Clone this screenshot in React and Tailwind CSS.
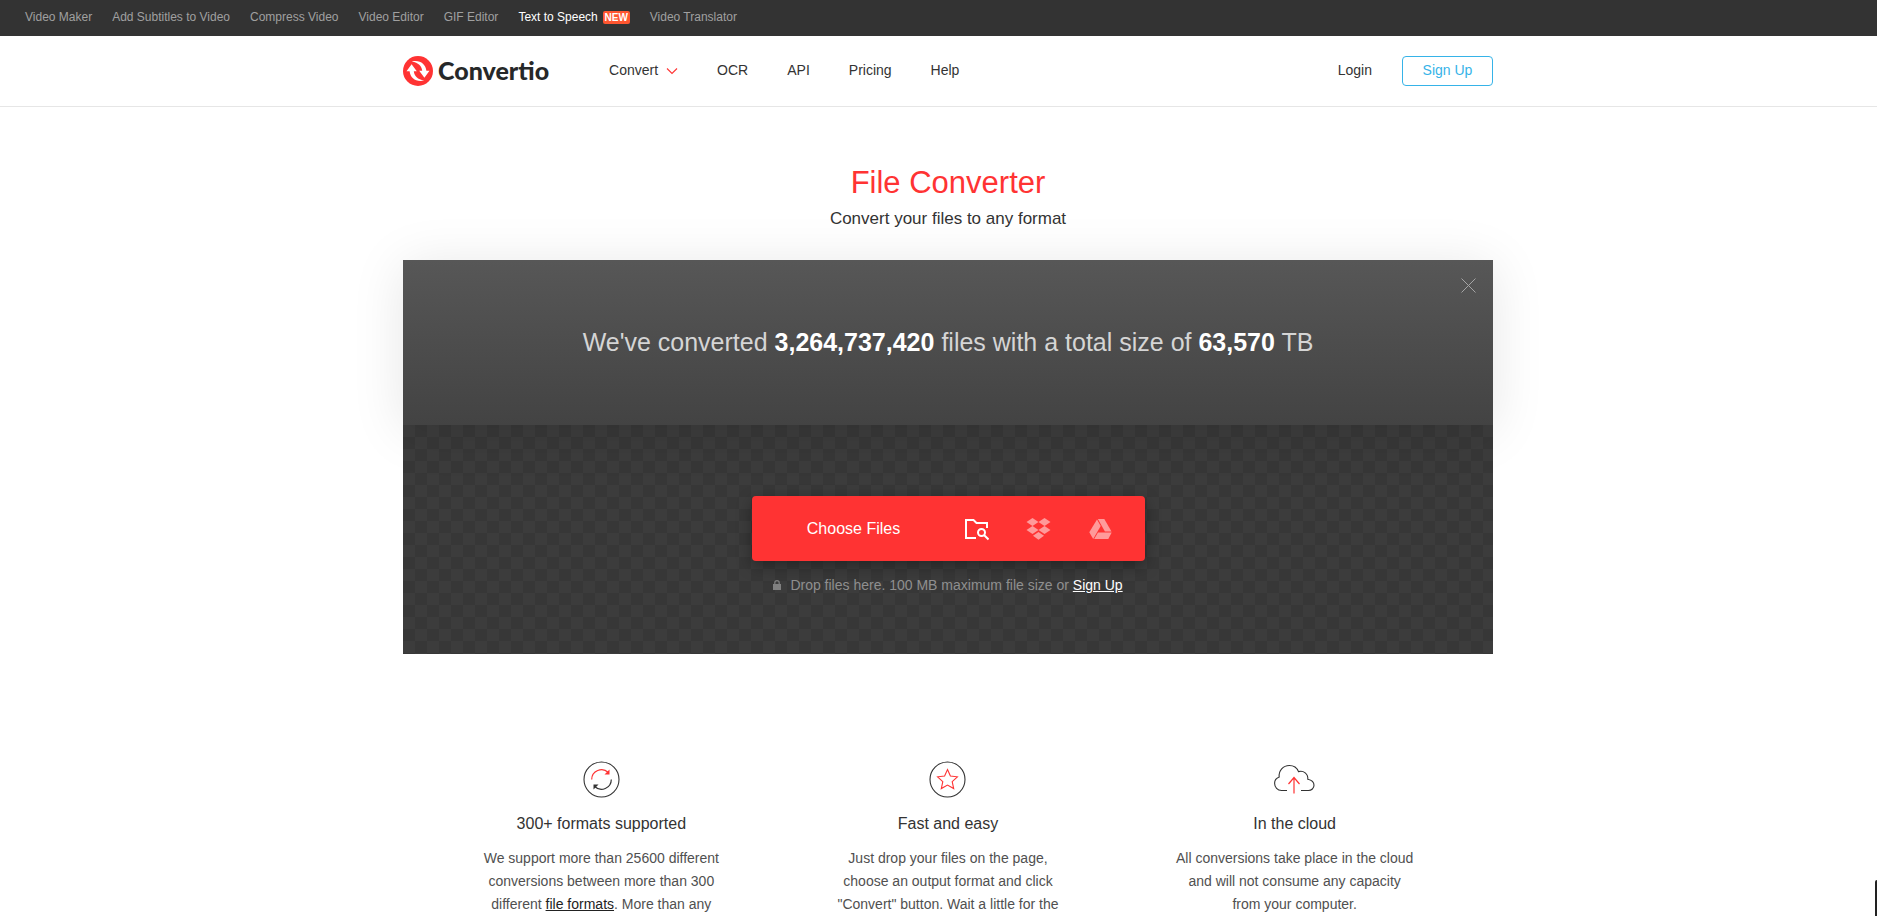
import React, { useState } from 'react';

const topLinks = [
  { label: 'Video Maker' },
  { label: 'Add Subtitles to Video' },
  { label: 'Compress Video' },
  { label: 'Video Editor' },
  { label: 'GIF Editor' },
  { label: 'Text to Speech', isNew: true },
  { label: 'Video Translator' },
];

const TopBar = () => (
  <nav className="bg-[#333] h-9 pl-[25px] pb-[2px] flex items-center gap-5 text-[12px] leading-4 text-[#a0a0a0]">
    {topLinks.map((link) => (
      <a
        key={link.label}
        href="#"
        className={`flex items-center whitespace-nowrap hover:text-white ${link.isNew ? 'text-white' : ''}`}
      >
        {link.label}
        {link.isNew && (
          <span className="ml-[5px] h-[13px] w-[27px] rounded-[2px] bg-[#ff5630] text-center text-[10px] leading-[13px] font-bold text-white">
            NEW
          </span>
        )}
      </a>
    ))}
  </nav>
);

const Logo = () => (
  <a href="#" aria-label="Convertio" className="flex items-center gap-[5px]">
    <svg width="30" height="30" viewBox="0 0 30 30">
      <circle cx="15" cy="15" r="15" fill="#f33" />
      <path d="M3.500 15.200 8.600 8.300l5.200 6.900h-3c.5 4.600 3.800 8.300 10.400 9.300-7.800 2-13.900-2.300-14.600-9.300z" fill="#fff" />
      <path d="M26.500 14.800 21.400 21.700l-5.200-6.900h3c-.5-4.600-3.800-8.300-10.400-9.300 7.800-2 13.900 2.300 14.600 9.300z" fill="#fff" />
    </svg>
    <span className="pb-[2px] font-['Lato',sans-serif] text-[25px] leading-[30px] font-black text-[#262829]">Convertio</span>
  </a>
);

const Header = () => (
  <header className="border-b border-[#e6e6e6] pl-[19px]">
    <div className="max-w-[1090px] h-[70px] mx-auto flex items-center text-[14px] leading-5 text-[#333]">
      <Logo />
      <nav className="ml-[60px] pb-[2px] flex items-center gap-[39px]">
        <a href="#" className="flex items-center gap-2">
          Convert
          <svg width="12" height="8" viewBox="0 0 12 8" fill="none" stroke="#f33" strokeWidth="1.1" className="mt-[2px]">
            <path d="M1 1.500l5 5 5-5" />
          </svg>
        </a>
        <a href="#">OCR</a>
        <a href="#">API</a>
        <a href="#">Pricing</a>
        <a href="#">Help</a>
      </nav>
      <div className="ml-auto flex items-center gap-[30px]">
        <a href="#" className="pb-[2px]">Login</a>
        <a href="#" className="w-[91px] h-[30px] border border-[#36b3e8] rounded text-center leading-[26px] text-[#36b3e8]">
          Sign Up
        </a>
      </div>
    </div>
  </header>
);

const Banner = ({ onClose }) => (
  <div className="relative z-10 h-[165px] pb-[2px] flex items-center justify-center bg-linear-to-b from-[#575757] to-[#434343] shadow-[0_5px_50px_rgba(0,0,0,0.1)]">
    <p className="text-[25px] leading-8 text-[#d5d5d5]">
      We've converted <b className="text-white">3,264,737,420</b> files with a total size of{' '}
      <b className="text-white">63,570</b> TB
    </p>
    <button type="button" aria-label="Close" onClick={onClose} className="absolute top-[18px] right-[17px] cursor-pointer">
      <svg width="15" height="15" viewBox="0 0 15 15" stroke="#a5a5a5" strokeWidth="1">
        <path d="M.5.5l14 14M14.500.5l-14 14" />
      </svg>
    </button>
  </div>
);

const sourceButton = 'w-[62px] h-full flex items-center justify-center cursor-pointer';

const ChooseFiles = () => (
  <div className="w-[393px] h-[65px] flex rounded bg-[#f33] text-white shadow-[0_5px_15px_rgba(0,0,0,0.35)]">
    <button type="button" className="flex-1 pl-[10px] text-[16px] leading-5 cursor-pointer">
      Choose Files
    </button>
    <button type="button" aria-label="From computer" className={sourceButton}>
      <svg width="24" height="24" viewBox="0 0 24 24" fill="none" stroke="#fff" strokeWidth="2">
        <path d="M11 21H1V3h7.500l3 3H22v5" />
        <circle cx="16.500" cy="15.500" r="3.500" />
        <path d="M19 18l4.500 4.500" />
      </svg>
    </button>
    <button type="button" aria-label="From Dropbox" className={sourceButton}>
      <svg width="25" height="22" viewBox="0 0 25 22" fill="#ff9a9a">
        <path d="M6.500 0l6 4-6 4-6-4zM18.500 0l6 4-6 4-6-4zM6.500 8l6 4-6 4-6-4zM18.500 8l6 4-6 4-6-4zM12.500 14l5.500 3.800-5.500 4-5.500-4z" />
      </svg>
    </button>
    <button type="button" aria-label="From Google Drive" className={`${sourceButton} mr-[13px]`}>
      <svg width="23" height="20" viewBox="0 0 23 20" fill="#ff9a9a">
        <path d="M8 .5l3.700 6.600L4.200 20 .3 13.200z" />
        <path d="M8.900 0h6.400l7.200 12.600h-6.600z" />
        <path d="M8.900 13.600h13.800L19.300 20H5.200z" />
      </svg>
    </button>
  </div>
);

const DropZone = () => (
  <div className="h-[229px] pt-[71px] flex flex-col items-center bg-[conic-gradient(#373737_25%,#3c3c3c_0_50%,#373737_0_75%,#3c3c3c_0)] bg-size-[24px_24px]">
    <ChooseFiles />
    <p className="mt-[14px] flex items-center text-[14px] leading-5 text-[#8f8f8f]">
      <svg width="8" height="10" viewBox="0 0 8 10" className="mr-[9px]">
        <rect y="4" width="8" height="6" fill="#808080" />
        <path d="M1.800 4.500V2.800a2.200 2.200 0 0 1 4.400 0v1.700" fill="none" stroke="#808080" strokeWidth="1.200" />
      </svg>
      <span>
        Drop files here. 100 MB maximum file size or{' '}
        <a href="#" className="text-white underline">Sign Up</a>
      </span>
    </p>
  </div>
);

const FormatsIcon = () => (
  <svg width="37" height="37" viewBox="0 0 37 37" fill="none">
    <circle cx="18.500" cy="18.500" r="17.500" stroke="#333" strokeWidth="1.100" />
    <path d="M8.700 18.500a9.800 9.800 0 0 1 16.600-7" stroke="#f33" strokeWidth="1.200" />
    <path d="M26.500 8.500v5h-5z" fill="#f33" />
    <path d="M28.300 18.500a9.800 9.800 0 0 1-16.600 7" stroke="#333" strokeWidth="1.200" />
    <path d="M10.500 28.500v-5h5z" fill="#333" />
  </svg>
);

const StarIcon = () => (
  <svg width="37" height="37" viewBox="0 0 37 37" fill="none">
    <circle cx="18.500" cy="18.500" r="17.500" stroke="#333" strokeWidth="1.100" />
    <path
      d="M18.500 8.500l2.900 6.500 7 .8-5.200 4.800 1.500 7-6.200-3.500-6.200 3.500 1.500-7-5.200-4.800 7-.8z"
      stroke="#f33"
      strokeWidth="1.100"
    />
  </svg>
);

const CloudIcon = () => (
  <svg width="41" height="37" viewBox="0 0 41 37" fill="none">
    <path
      d="M13 29.500H7.500C3.500 29.500.6 26.200.6 22.300c0-2.800 1.700-5.100 4.600-6.200C4.400 9.500 9.200 4.500 15.300 4.500c4.500 0 7.800 2.500 9.200 6.100 5-1.500 9.800 2.200 9.300 7.700C37.400 19 40 21.300 40 24.300c0 2.900-2.500 5.200-5.500 5.200H27"
      stroke="#333"
      strokeWidth="1.100"
    />
    <path d="M20 32.500V17M14.500 23l5.500-6.500 5.500 6.500" stroke="#f33" strokeWidth="1.200" />
  </svg>
);

const Feature = ({ icon, title, children }) => (
  <section className="flex flex-col items-center text-center">
    {icon}
    <h2 className="mt-4 text-[16px] leading-5 text-[#333]">{title}</h2>
    <p className="mt-[13px] w-[240px] text-[14px] leading-[23px] text-[#505050]">{children}</p>
  </section>
);

const App = () => {
  const [showBanner, setShowBanner] = useState(true);

  return (
    <div className="bg-white font-['Liberation_Sans',Arial,sans-serif]">
      <TopBar />
      <Header />
      <main className="pl-[19px]">
        <div className="max-w-[1090px] mx-auto">
          <div className="pt-[56px] text-center">
            <h1 className="text-[31px] leading-10 text-[#f33]">File Converter</h1>
            <p className="mt-1 text-[17px] leading-6 text-[#333]">Convert your files to any format</p>
          </div>

          <div className="mt-[29px]">
            {showBanner && <Banner onClose={() => setShowBanner(false)} />}
            <DropZone />
          </div>

          <div className="mt-[107px] px-[25px] grid grid-cols-3">
            <Feature icon={<FormatsIcon />} title="300+ formats supported">
              We support more than 25600 different conversions between more than 300 different{' '}
              <a href="#" className="text-[#222] underline">file formats</a>. More than any
            </Feature>
            <Feature icon={<StarIcon />} title="Fast and easy">
              Just drop your files on the page, choose an output format and click "Convert" button. Wait a little for the
            </Feature>
            <Feature icon={<CloudIcon />} title="In the cloud">
              All conversions take place in the cloud and will not consume any capacity from your computer.
            </Feature>
          </div>
        </div>
      </main>

      {/* edge of the collapsed side widget */}
      <div className="fixed right-0 bottom-0 w-[2px] h-9 rounded-tl-[2px] bg-[#222]" />
    </div>
  );
};

export default App;
